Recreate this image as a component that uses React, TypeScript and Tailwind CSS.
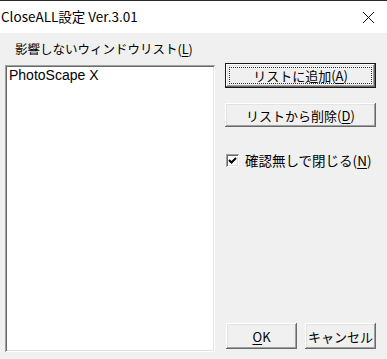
import React from "react";

const ui = { fontFamily: '"Noto Sans CJK JP", "Liberation Sans", sans-serif' };

const raised =
  "shadow-[inset_-1px_-1px_#696969,inset_1px_1px_#ffffff,inset_-2px_-2px_#a0a0a0,inset_2px_2px_#e3e3e3]";
const sunken =
  "shadow-[inset_1px_1px_#a0a0a0,inset_-1px_-1px_#ffffff,inset_2px_2px_#696969,inset_-2px_-2px_#e3e3e3]";

const Key = ({ k }: { k: string }) => <span className="underline underline-offset-2">{k}</span>;

const Btn = ({
  children,
  def,
  h = "h-[25px]",
}: {
  children: React.ReactNode;
  def?: boolean;
  h?: string;
}) => (
  <div className={`${h} w-full ${def ? "border border-[#1a1a1a]" : ""}`}>
    <div className={`h-full w-full bg-[#f0f0f0] ${raised} flex items-center justify-center p-[3px]`}>
      <div
        className={`h-full w-full flex items-center justify-center whitespace-nowrap text-[13px] leading-none text-black ${
          def ? "border border-dotted border-[#333]" : ""
        }`}
      >
        {children}
      </div>
    </div>
  </div>
);

export default function App() {
  return (
    <div className="w-[387px] h-[359px] bg-[#f0f0f0] flex flex-col overflow-hidden" style={ui}>
      {/* title bar */}
      <div className="h-[33px] bg-white border-t border-[#2b2b2b] flex items-center justify-between shrink-0">
        <span className="text-[13.5px] text-black pl-px leading-none">CloseALL設定 Ver.3.01</span>
        <svg width="13" height="13" viewBox="0 0 13 13" className="mr-[12px]">
          <path d="M1 1 L12 12 M12 1 L1 12" stroke="#111" strokeWidth="1" />
        </svg>
      </div>

      <div className="flex flex-1 px-[5px]">
        {/* left */}
        <div className="w-[210px] flex flex-col pb-[7px]">
          <div className="pl-[10px] pt-[8px] h-[32px] text-[12.5px] leading-[16px] text-black whitespace-nowrap">
            影響しないウィンドウリスト(<Key k="L" />)
          </div>
          <div className={`flex-1 bg-white ${sunken} px-[4px] pt-[2px]`}>
            <div className="text-[14px] leading-[16px] text-black" style={{ fontFamily: '"Liberation Sans", sans-serif' }}>
              PhotoScape X
            </div>
          </div>
        </div>

        {/* right */}
        <div className="ml-[10px] w-[151px] flex flex-col pt-[30px] pb-[10px]">
          <Btn def>
            リストに追加(<Key k="A" />)
          </Btn>
          <div className="mt-[15px]">
            <Btn h="h-[24px]">
              リストから削除(<Key k="D" />)
            </Btn>
          </div>
          <div className="mt-[27px] flex items-center">
            <div className={`ml-[1px] w-[13px] h-[13px] shrink-0 bg-white ${sunken} flex items-center justify-center`}>
              <svg width="9" height="9" viewBox="0 0 9 9">
                <path d="M1 4 L3.5 6.5 L8 2" stroke="#000" strokeWidth="2" fill="none" />
              </svg>
            </div>
            <span className="ml-[6px] text-[13.5px] leading-none text-black whitespace-nowrap">
              確認無しで閉じる(<Key k="N" />)
            </span>
          </div>
          <div className="mt-auto flex gap-[8px] pl-[1px]">
            <div className="w-[71px]">
              <Btn h="h-[26px]">
                <Key k="O" />K
              </Btn>
            </div>
            <div className="w-[71px]">
              <Btn h="h-[26px]">キャンセル</Btn>
            </div>
          </div>
        </div>
      </div>
    </div>
  );
}
